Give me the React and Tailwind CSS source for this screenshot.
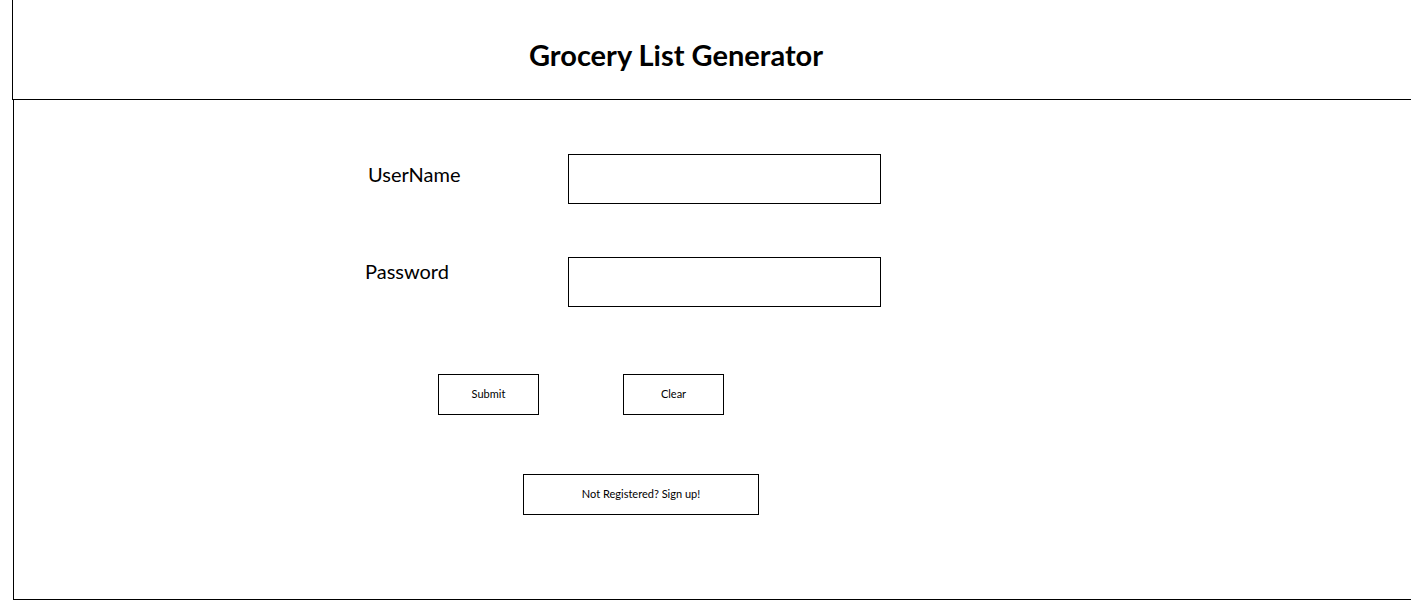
export default function App() {
  const font = { fontFamily: "Lato, 'Open Sans', sans-serif" };
  return (
    <div className="w-[1411px] h-[610px] overflow-hidden bg-white text-black" style={font}>
      <div className="ml-[12px] w-[1420px] h-[100px] border-l border-b border-black flex items-center pl-[516px] pt-[10px]">
        <h1 className="text-[29px] font-bold leading-none">Grocery List Generator</h1>
      </div>
      <div className="ml-[13px] w-[1420px] h-[500px] border-l border-b border-black pt-[54px]">
        <div className="flex h-[50px]">
          <div className="w-[554px] pl-[354px] pt-[8px] text-[20px] leading-[24px]">UserName</div>
          <div className="w-[313px] h-[50px] border border-black" />
        </div>
        <div className="flex h-[50px] mt-[53px]">
          <div className="w-[554px] pl-[351px] pt-[2px] text-[20px] leading-[24px]">Password</div>
          <div className="w-[313px] h-[50px] border border-black" />
        </div>
        <div className="flex mt-[67px] pl-[424px] gap-[84px]">
          <button className="w-[101px] h-[41px] border border-black text-[11px] flex items-center justify-center">Submit</button>
          <button className="w-[101px] h-[41px] border border-black text-[11px] flex items-center justify-center">Clear</button>
        </div>
        <div className="flex mt-[59px] pl-[509px]">
          <button className="w-[236px] h-[41px] border border-black text-[11px] flex items-center justify-center">Not Registered? Sign up!</button>
        </div>
      </div>
    </div>
  );
}
